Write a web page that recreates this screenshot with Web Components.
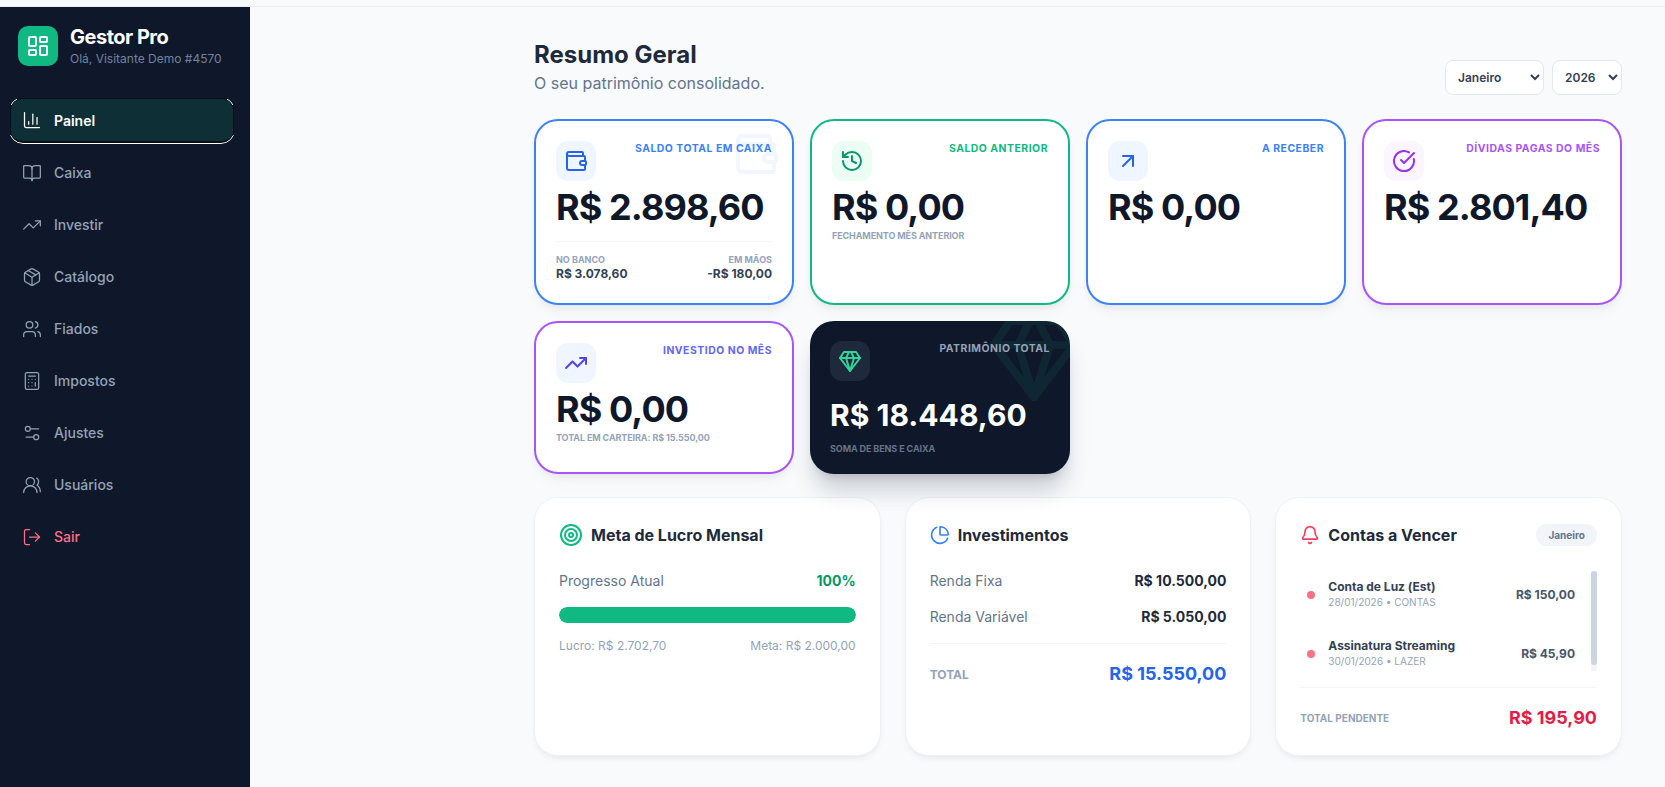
<!DOCTYPE html>
<html lang="pt-BR">
<head>
<meta charset="utf-8">
<title>Gestor Pro</title>
<style>
  html, body { margin: 0; height: 100%; }
  body { font-family: Inter, "Liberation Sans", sans-serif; background: #f8fafc; color: #0f172a; overflow: hidden; }
</style>
</head>
<body>
<app-shell>
  <side-bar slot="side" user="Olá, Visitante Demo #4570">
    <nav-item icon="chart" active>Painel</nav-item>
    <nav-item icon="book">Caixa</nav-item>
    <nav-item icon="trend">Investir</nav-item>
    <nav-item icon="package">Catálogo</nav-item>
    <nav-item icon="users">Fiados</nav-item>
    <nav-item icon="calculator">Impostos</nav-item>
    <nav-item icon="sliders">Ajustes</nav-item>
    <nav-item icon="usersRound">Usuários</nav-item>
    <nav-item icon="logout" danger>Sair</nav-item>
  </side-bar>

  <page-header title="Resumo Geral" subtitle="O seu patrimônio consolidado.">
    <period-select options="Janeiro,Fevereiro,Março" style="--w:99px"></period-select>
    <period-select options="2026,2025" style="--w:70px"></period-select>
  </page-header>

  <stat-grid>
    <stat-card label="Saldo Total em Caixa" value="R$ 2.898,60" icon="wallet" watermark="wallet" accent="#3b82f6" label-color="#3b82f6" icon-color="#2563eb" icon-bg="#eff6ff">
      <split-row slot="foot" a="No Banco" av="R$ 3.078,60" b="Em Mãos" bv="-R$ 180,00"></split-row>
    </stat-card>
    <stat-card label="Saldo Anterior" value="R$ 0,00" note="Fechamento mês anterior" icon="history" accent="#10b981" label-color="#10b981" icon-color="#059669" icon-bg="#ecfdf5"></stat-card>
    <stat-card label="A Receber" value="R$ 0,00" icon="arrowUpRight" accent="#3b82f6" label-color="#3b82f6" icon-color="#2563eb" icon-bg="#eff6ff"></stat-card>
    <stat-card label="Dívidas Pagas do Mês" value="R$ 2.801,40" icon="circleCheck" accent="#a855f7" label-color="#a855f7" icon-color="#9333ea" icon-bg="#faf5ff"></stat-card>
    <stat-card label="Investido no Mês" value="R$ 0,00" note="Total em carteira: R$ 15.550,00" icon="trend" accent="#a855f7" label-color="#6366f1" icon-color="#4f46e5" icon-bg="#eff6ff"></stat-card>
    <stat-card dark label="Patrimônio Total" value="R$ 18.448,60" note="Soma de bens e caixa" icon="gem" watermark="gem" label-color="#94a3b8" icon-color="#34d399" icon-bg="#1e293b"></stat-card>
  </stat-grid>

  <panel-grid>
    <panel-card heading="Meta de Lucro Mensal" icon="target" icon-size="24" icon-color="#10b981">
      <goal-progress percent="100" left="Lucro: R$ 2.702,70" right="Meta: R$ 2.000,00"></goal-progress>
    </panel-card>
    <panel-card heading="Investimentos" icon="pie" icon-color="#3b82f6">
      <money-line label="Renda Fixa" value="R$ 10.500,00"></money-line>
      <money-line label="Renda Variável" value="R$ 5.050,00"></money-line>
      <total-line label="Total" value="R$ 15.550,00" color="#2563eb"></total-line>
    </panel-card>
    <panel-card heading="Contas a Vencer" icon="bell" icon-color="#f43f5e" badge="Janeiro">
      <bill-list>
        <bill-item name="Conta de Luz (Est)" meta="28/01/2026 • CONTAS" value="R$ 150,00"></bill-item>
        <bill-item name="Assinatura Streaming" meta="30/01/2026 • LAZER" value="R$ 45,90"></bill-item>
      </bill-list>
      <total-line compact label="Total Pendente" value="R$ 195,90" color="#e11d48"></total-line>
    </panel-card>
  </panel-grid>
</app-shell>

<script>
// lucide shapes, only the ones used here
const ICONS = {
  logo: '<rect x="3" y="3" width="7" height="9" rx="1"/><rect x="14" y="3" width="7" height="5" rx="1"/><rect x="14" y="12" width="7" height="9" rx="1"/><rect x="3" y="16" width="7" height="5" rx="1"/>',
  chart: '<path d="M3 3v16a2 2 0 0 0 2 2h16"/><path d="M18 17V9"/><path d="M13 17V5"/><path d="M8 17v-3"/>',
  book: '<path d="M12 7v14"/><path d="M3 18a1 1 0 0 1-1-1V4a1 1 0 0 1 1-1h5a4 4 0 0 1 4 4 4 4 0 0 1 4-4h5a1 1 0 0 1 1 1v13a1 1 0 0 1-1 1h-6a3 3 0 0 0-3 3 3 3 0 0 0-3-3z"/>',
  trend: '<path d="M16 7h6v6"/><path d="m22 7-8.5 8.5-5-5L2 17"/>',
  package: '<path d="M11 21.73a2 2 0 0 0 2 0l7-4A2 2 0 0 0 21 16V8a2 2 0 0 0-1-1.73l-7-4a2 2 0 0 0-2 0l-7 4A2 2 0 0 0 3 8v8a2 2 0 0 0 1 1.73z"/><path d="M12 22V12"/><path d="m3.3 7 7.703 4.734a2 2 0 0 0 1.994 0L20.7 7"/><path d="m7.5 4.27 9 5.15"/>',
  users: '<path d="M16 21v-2a4 4 0 0 0-4-4H6a4 4 0 0 0-4 4v2"/><circle cx="9" cy="7" r="4"/><path d="M22 21v-2a4 4 0 0 0-3-3.87"/><path d="M16 3.13a4 4 0 0 1 0 7.75"/>',
  calculator: '<rect x="4" y="2" width="16" height="20" rx="2"/><line x1="8" y1="6" x2="16" y2="6"/><line x1="16" y1="14" x2="16" y2="18"/><path d="M16 10h.01"/><path d="M12 10h.01"/><path d="M8 10h.01"/><path d="M12 14h.01"/><path d="M8 14h.01"/><path d="M12 18h.01"/><path d="M8 18h.01"/>',
  sliders: '<path d="M20 7h-9"/><path d="M14 17H5"/><circle cx="17" cy="17" r="3"/><circle cx="7" cy="7" r="3"/>',
  usersRound: '<path d="M18 21a8 8 0 0 0-16 0"/><circle cx="10" cy="8" r="5"/><path d="M22 20c0-3.37-2-6.5-4-8a5 5 0 0 0-.45-8.3"/>',
  logout: '<path d="m16 17 5-5-5-5"/><path d="M21 12H9"/><path d="M9 21H5a2 2 0 0 1-2-2V5a2 2 0 0 1 2-2h4"/>',
  wallet: '<path d="M19 7V4a1 1 0 0 0-1-1H5a2 2 0 0 0 0 4h15a1 1 0 0 1 1 1v4h-3a2 2 0 0 0 0 4h3a1 1 0 0 0 1-1v-2a1 1 0 0 0-1-1"/><path d="M3 5v14a2 2 0 0 0 2 2h15a1 1 0 0 0 1-1v-4"/>',
  history: '<path d="M3 12a9 9 0 1 0 9-9 9.75 9.75 0 0 0-6.74 2.74L3 8"/><path d="M3 3v5h5"/><path d="M12 7v5l4 2"/>',
  arrowUpRight: '<path d="M7 7h10v10"/><path d="M7 17 17 7"/>',
  circleCheck: '<path d="M21.801 10A10 10 0 1 1 17 3.335"/><path d="m9 11 3 3L22 4"/>',
  gem: '<path d="M6 3h12l4 6-10 13L2 9Z"/><path d="M11 3 8 9l4 13 4-13-3-6"/><path d="M2 9h20"/>',
  target: '<circle cx="12" cy="12" r="10"/><circle cx="12" cy="12" r="6"/><circle cx="12" cy="12" r="2"/>',
  pie: '<path d="M21 12c.552 0 1.005-.449.95-.998a10 10 0 0 0-8.953-8.951c-.55-.055-.998.398-.998.95v8a1 1 0 0 0 1 1z"/><path d="M21.21 15.89A10 10 0 1 1 8 2.83"/>',
  bell: '<path d="M10.268 21a2 2 0 0 0 3.464 0"/><path d="M3.262 15.326A1 1 0 0 0 4 17h16a1 1 0 0 0 .74-1.673C19.41 13.956 18 12.499 18 8A6 6 0 0 0 6 8c0 4.499-1.411 5.956-2.738 7.326"/>'
};

function icon(name, size, color, stroke) {
  return `<svg width="${size}" height="${size}" viewBox="0 0 24 24" fill="none" stroke="${color || 'currentColor'}" stroke-width="${stroke || 2}" stroke-linecap="round" stroke-linejoin="round">${ICONS[name]}</svg>`;
}

class Base extends HTMLElement {
  constructor() {
    super();
    this.attachShadow({mode: "open"});
  }
  attr(n, d) {
    return this.hasAttribute(n) ? this.getAttribute(n) : (d === undefined ? "" : d);
  }
}

class AppShell extends Base {
  connectedCallback() {
    this.shadowRoot.innerHTML = `
      <style>
        :host { display: flex; flex-direction: column; height: 787px; }
        #strip { height: 6px; border-bottom: 1px solid #eceef1; background: #f9fafb; flex: none; }
        #body { display: flex; flex: 1; min-height: 0; }
        #main { flex: 1; min-width: 0; padding: 32px 43px 0 284px; box-sizing: border-box; }
      </style>
      <div id="strip"></div>
      <div id="body">
        <slot name="side"></slot>
        <div id="main"><slot></slot></div>
      </div>
    `;
  }
}

class SideBar extends Base {
  connectedCallback() {
    this.shadowRoot.innerHTML = `
      <style>
        :host { display: block; width: 250px; flex: none; background: #0f172a; box-sizing: border-box; padding: 18px 16px 0 10px; }
        #brand { display: flex; align-items: center; gap: 12px; padding-left: 8px; margin-bottom: 31px; }
        #logo { width: 40px; height: 40px; border-radius: 10px; background: #10b981; color: #fff; display: flex; align-items: center; justify-content: center; flex: none; }
        #who { padding-top: 1px; }
        h1 { margin: 0; font-size: 20px; line-height: 22px; font-weight: 700; color: #fff; letter-spacing: -0.5px; }
        p { margin: 3px 0 0; font-size: 12px; line-height: 16px; color: #6f839e; white-space: nowrap; }
        nav { display: flex; flex-direction: column; gap: 7px; }
      </style>
      <div id="brand">
        <div id="logo">${icon("logo", 24)}</div>
        <div id="who"><h1>Gestor Pro</h1><p>${this.attr("user")}</p></div>
      </div>
      <nav><slot></slot></nav>
    `;
  }
}

class NavItem extends Base {
  connectedCallback() {
    const color = this.hasAttribute("active") ? "#fff" : this.hasAttribute("danger") ? "#fb7185" : "#94a3b8";
    this.shadowRoot.innerHTML = `
      <style>
        :host { display: block; position: relative; height: 45px; box-sizing: border-box; border-radius: 12px; color: ${color}; }
        :host([active]) { background: #0f2f36; border: 1px solid #0b0f14; border-bottom-width: 2px; }
        :host([active])::before {
          content: ""; position: absolute; inset: -2px -2px -3px -2px; border: 1px solid #fff; border-radius: 14px;
          -webkit-mask:
            linear-gradient(#000 0 0) left top / 8px 8px no-repeat,
            linear-gradient(#000 0 0) right top / 8px 8px no-repeat,
            linear-gradient(#000 0 0) left bottom / 100% 9px no-repeat;
        }
        a { display: flex; align-items: center; gap: 12px; height: 100%; padding-left: 12px; font-size: 14px; font-weight: 500; box-sizing: border-box; }
        :host([active]) a { padding-left: 11px; font-weight: 600; }
        svg { display: block; flex: none; }
      </style>
      <a>${icon(this.attr("icon"), 20, null, 1.5)}<slot></slot></a>
    `;
  }
}

class PageHeader extends Base {
  connectedCallback() {
    this.shadowRoot.innerHTML = `
      <style>
        :host { display: flex; justify-content: space-between; align-items: flex-end; margin-bottom: 24px; }
        h2 { margin: 0; font-size: 24px; line-height: 32px; font-weight: 700; color: #1e293b; }
        p { margin: 0; font-size: 16px; line-height: 24px; color: #64748b; }
        #tools { display: flex; gap: 8px; }
      </style>
      <div><h2>${this.attr("title")}</h2><p>${this.attr("subtitle")}</p></div>
      <div id="tools"><slot></slot></div>
    `;
    this.removeAttribute("title");
  }
}

class PeriodSelect extends Base {
  connectedCallback() {
    const opts = this.attr("options").split(",").map(o => `<option>${o}</option>`).join("");
    this.shadowRoot.innerHTML = `
      <style>
        :host { display: block; }
        select { display: block; width: var(--w); height: 35px; border: 1px solid #e2e8f0; border-radius: 8px; background: #fff; color: #334155; font: 600 12px Inter, sans-serif; padding: 0 0 0 8px; outline: none; }
      </style>
      <select>${opts}</select>
    `;
  }
}

class StatGrid extends Base {
  connectedCallback() {
    this.shadowRoot.innerHTML = `
      <style>
        :host { display: grid; grid-template-columns: repeat(4, 1fr); grid-template-rows: 186px 153px; gap: 16px; margin-bottom: 23px; }
      </style>
      <slot></slot>
    `;
  }
}

class StatCard extends Base {
  connectedCallback() {
    const note = this.attr("note");
    const mark = this.attr("watermark");
    this.shadowRoot.innerHTML = `
      <style>
        :host { display: block; position: relative; overflow: hidden; box-sizing: border-box; background: #fff; border: 2px solid ${this.attr("accent", "transparent")}; border-radius: 24px; padding: 20px; box-shadow: 0 4px 6px -1px rgba(15,23,42,.05), 0 10px 15px -3px rgba(15,23,42,.03); }
        :host([dark]) { background: #0f172a; border: 0; padding: 20px; box-shadow: 0 20px 25px -5px rgba(15,23,42,.2), 0 8px 10px -6px rgba(15,23,42,.15); }
        #top { display: flex; justify-content: space-between; align-items: flex-start; position: relative; }
        #ico { width: 40px; height: 40px; border-radius: 12px; background: ${this.attr("icon-bg")}; display: flex; align-items: center; justify-content: center; }
        #label { font-size: 10.4px; line-height: 14px; font-weight: 700; letter-spacing: .05em; text-transform: uppercase; color: ${this.attr("label-color")}; margin-top: 1px; white-space: nowrap; }
        #value { position: relative; font-size: 36px; line-height: 40px; font-weight: 700; letter-spacing: -0.9px; color: #0f172a; margin-top: 6px; white-space: nowrap; }
        :host([dark]) #value { color: #fff; font-size: 30px; line-height: 36px; letter-spacing: 0; margin-top: 16px; }
        #note { position: relative; font-size: 9px; line-height: 12px; font-weight: 700; letter-spacing: -0.1px; text-transform: uppercase; color: #94a3b8; margin-top: 3px; }
        :host([dark]) #note { color: #64748b; margin-top: 10px; }
        #mark { position: absolute; top: 9px; right: 12px; opacity: .06; line-height: 0; }
        :host([dark]) #mark { top: -12px; right: -12px; opacity: .1; }
        svg { display: block; }
      </style>
      ${mark ? `<div id="mark">${icon(mark, this.hasAttribute("dark") ? 96 : 48, this.hasAttribute("dark") ? "#10b981" : this.attr("icon-color"))}</div>` : ""}
      <div id="top">
        <div id="ico">${icon(this.attr("icon"), 24, this.attr("icon-color"))}</div>
        <div id="label">${this.attr("label")}</div>
      </div>
      <div id="value">${this.attr("value")}</div>
      ${note ? `<div id="note">${note}</div>` : ""}
      <slot name="foot"></slot>
    `;
  }
}

class SplitRow extends Base {
  connectedCallback() {
    this.shadowRoot.innerHTML = `
      <style>
        :host { display: flex; justify-content: space-between; margin-top: 14px; padding-top: 12px; border-top: 1px solid #f1f5f9; position: relative; }
        small { display: block; font-size: 9px; line-height: 12px; font-weight: 700; text-transform: uppercase; color: #94a3b8; }
        b { display: block; font-size: 12px; line-height: 16px; font-weight: 700; color: #334155; }
        div:last-child { text-align: right; }
      </style>
      <div><small>${this.attr("a")}</small><b>${this.attr("av")}</b></div>
      <div><small>${this.attr("b")}</small><b>${this.attr("bv")}</b></div>
    `;
  }
}

class PanelGrid extends Base {
  connectedCallback() {
    this.shadowRoot.innerHTML = `
      <style>
        :host { display: grid; grid-template-columns: repeat(3, 1fr); grid-auto-rows: 259px; gap: 24px; }
      </style>
      <slot></slot>
    `;
  }
}

class PanelCard extends Base {
  connectedCallback() {
    const badge = this.attr("badge");
    this.shadowRoot.innerHTML = `
      <style>
        :host { display: block; box-sizing: border-box; background: #fff; border: 1px solid #eef2f7; border-radius: 24px; padding: 25px 24px 24px; box-shadow: 0 4px 6px -1px rgba(15,23,42,.05), 0 2px 4px -2px rgba(15,23,42,.03); }
        header { display: flex; align-items: center; gap: 8px; height: 24px; margin-bottom: 24px; }
        h3 { margin: 0; font-size: 16px; line-height: 24px; font-weight: 700; color: #1e293b; flex: 1; white-space: nowrap; }
        span { font-size: 10px; line-height: 14px; font-weight: 700; color: #64748b; background: #f1f5f9; border-radius: 999px; padding: 4px 12px; }
        svg { display: block; flex: none; }
      </style>
      <header>
        ${icon(this.attr("icon"), this.attr("icon-size", 20), this.attr("icon-color"))}
        <h3>${this.attr("heading")}</h3>
        ${badge ? `<span>${badge}</span>` : ""}
      </header>
      <slot></slot>
    `;
  }
}

class GoalProgress extends Base {
  connectedCallback() {
    this.shadowRoot.innerHTML = `
      <style>
        :host { display: block; }
        #head, #foot { display: flex; justify-content: space-between; }
        #head { font-size: 14px; line-height: 20px; color: #64748b; margin-bottom: 16px; }
        #head b { color: #059669; font-weight: 700; }
        #bar { height: 16px; border-radius: 999px; background: #f1f5f9; overflow: hidden; }
        #fill { height: 100%; background: #10b981; border-radius: 999px; width: ${this.attr("percent")}%; }
        #foot { font-size: 12px; line-height: 16px; color: #94a3b8; margin-top: 15px; }
      </style>
      <div id="head"><span>Progresso Atual</span><b>${this.attr("percent")}%</b></div>
      <div id="bar"><div id="fill"></div></div>
      <div id="foot"><span>${this.attr("left")}</span><span>${this.attr("right")}</span></div>
    `;
  }
}

class MoneyLine extends Base {
  connectedCallback() {
    this.shadowRoot.innerHTML = `
      <style>
        :host { display: flex; justify-content: space-between; font-size: 14px; line-height: 20px; color: #64748b; margin-bottom: 16px; }
        b { color: #1e293b; font-weight: 700; }
      </style>
      <span>${this.attr("label")}</span><b>${this.attr("value")}</b>
    `;
  }
}

class TotalLine extends Base {
  connectedCallback() {
    this.shadowRoot.innerHTML = `
      <style>
        :host { display: flex; justify-content: space-between; align-items: center; border-top: 1px solid #f1f5f9; padding-top: 16px; }
        span { font-size: 12px; font-weight: 700; text-transform: uppercase; color: #94a3b8; }
        :host([compact]) span { font-size: 10px; }
        b { font-size: 18px; line-height: 28px; font-weight: 700; color: ${this.attr("color")}; }
      </style>
      <span>${this.attr("label")}</span><b>${this.attr("value")}</b>
    `;
  }
}

// the scrollbar is drawn by hand, headless chrome hides the native one
class BillList extends Base {
  connectedCallback() {
    this.shadowRoot.innerHTML = `
      <style>
        :host { display: flex; height: 100px; margin-bottom: 16px; }
        #list { flex: 1; min-width: 0; height: 103px; margin-top: -3px; display: flex; flex-direction: column; gap: 8px; overflow: hidden; }
        #track { width: 6px; flex: none; background: #f1f5f9; }
        #thumb { height: 94px; background: #cbd5e1; border-radius: 6px; }
      </style>
      <div id="list"><slot></slot></div>
      <div id="track"><div id="thumb"></div></div>
    `;
  }
}

class BillItem extends Base {
  connectedCallback() {
    this.shadowRoot.innerHTML = `
      <style>
        :host { display: flex; align-items: center; height: 51px; flex: none; padding: 0 16px 0 7px; }
        i { width: 8px; height: 8px; border-radius: 50%; background: #fb7185; flex: none; margin: 2px 13px 0 0; }
        div { flex: 1; min-width: 0; }
        strong { display: block; font-size: 12px; line-height: 16px; font-weight: 700; color: #334155; white-space: nowrap; }
        small { display: block; font-size: 10px; line-height: 14px; color: #94a3b8; white-space: nowrap; }
        b { font-size: 12px; font-weight: 700; color: #475569; margin-top: 2px; }
      </style>
      <i></i><div><strong>${this.attr("name")}</strong><small>${this.attr("meta")}</small></div><b>${this.attr("value")}</b>
    `;
  }
}

customElements.define("app-shell", AppShell);
customElements.define("side-bar", SideBar);
customElements.define("nav-item", NavItem);
customElements.define("page-header", PageHeader);
customElements.define("period-select", PeriodSelect);
customElements.define("stat-grid", StatGrid);
customElements.define("stat-card", StatCard);
customElements.define("split-row", SplitRow);
customElements.define("panel-grid", PanelGrid);
customElements.define("panel-card", PanelCard);
customElements.define("goal-progress", GoalProgress);
customElements.define("money-line", MoneyLine);
customElements.define("total-line", TotalLine);
customElements.define("bill-list", BillList);
customElements.define("bill-item", BillItem);
</script>
</body>
</html>
